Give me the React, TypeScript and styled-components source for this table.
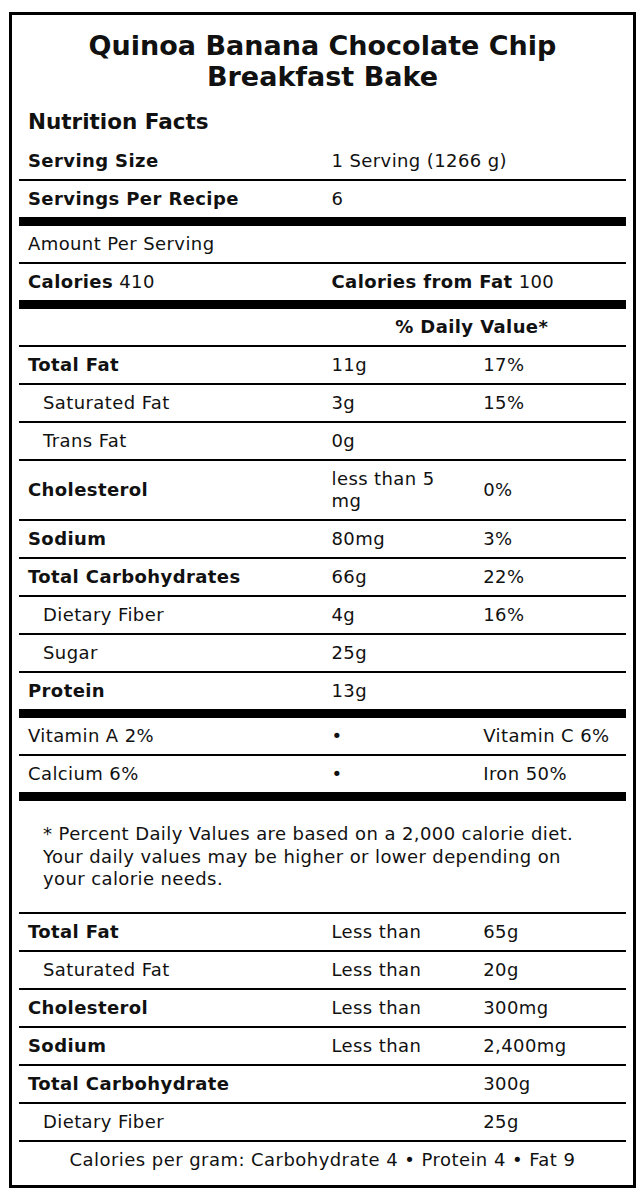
import React from "react";
import styled, { createGlobalStyle } from "styled-components";

const Global = createGlobalStyle`
  html, body { margin: 0; padding: 0; background: #fff; }
  body { font-family: "DejaVu Sans", "Liberation Sans", sans-serif; color: #111; }
  * { box-sizing: border-box; }
`;

const Label = styled.div`
  width: 627px;
  margin: 12px 0 10px 9px;
  border: 3px solid #000;
  padding: 7px;
  background: #fff;
`;

const Title = styled.h1`
  margin: 0;
  padding: 8px 0 0;
  font-size: 27px;
  line-height: 31px;
  font-weight: bold;
  text-align: center;
`;

const Heading = styled.h2`
  margin: 0;
  padding: 15px 9px 6px;
  font-size: 21.5px;
  line-height: 30px;
  font-weight: bold;
`;

type Border = "thin" | "thick" | "none";

const Row = styled.div<{ $border?: Border }>`
  display: grid;
  grid-template-columns: 50% 25% 25%;
  align-items: center;
  border-bottom: ${({ $border = "thin" }) =>
    $border === "thick" ? "9px solid #000" : $border === "none" ? "0" : "2px solid #000"};
`;

const Cell = styled.div<{ $bold?: boolean; $indent?: boolean; $span?: number; $center?: boolean }>`
  grid-column: span ${({ $span = 1 }) => $span};
  padding: 7px 14px 7px ${({ $indent }) => ($indent ? "24px" : "9px")};
  font-size: 18px;
  line-height: 22px;
  letter-spacing: 0.4px;
  min-height: 36px;
  display: flex;
  align-items: center;
  justify-content: ${({ $center }) => ($center ? "center" : "flex-start")};
  font-weight: ${({ $bold }) => ($bold ? "bold" : "normal")};
`;

const Strong = styled.span`
  font-weight: bold;
`;

const Footnote = styled.p`
  margin: 0;
  padding: 22px 35px 21px 24px;
  font-size: 18px;
  line-height: 22.5px;
  letter-spacing: 0.4px;
  border-bottom: 2px solid #000;
`;

const PerGram = styled.div`
  padding: 7px 9px;
  font-size: 18px;
  line-height: 22px;
  letter-spacing: 0.45px;
  text-align: center;
`;

type Nutrient = { name: string; amount: string; dv?: string; bold?: boolean; indent?: boolean; last?: boolean };

const nutrients: Nutrient[] = [
  { name: "Total Fat", amount: "11g", dv: "17%", bold: true },
  { name: "Saturated Fat", amount: "3g", dv: "15%", indent: true },
  { name: "Trans Fat", amount: "0g", indent: true },
  { name: "Cholesterol", amount: "less than 5 mg", dv: "0%", bold: true },
  { name: "Sodium", amount: "80mg", dv: "3%", bold: true },
  { name: "Total Carbohydrates", amount: "66g", dv: "22%", bold: true },
  { name: "Dietary Fiber", amount: "4g", dv: "16%", indent: true },
  { name: "Sugar", amount: "25g", indent: true },
  { name: "Protein", amount: "13g", bold: true, last: true },
];

const limits: Nutrient[] = [
  { name: "Total Fat", amount: "Less than", dv: "65g", bold: true },
  { name: "Saturated Fat", amount: "Less than", dv: "20g", indent: true },
  { name: "Cholesterol", amount: "Less than", dv: "300mg", bold: true },
  { name: "Sodium", amount: "Less than", dv: "2,400mg", bold: true },
  { name: "Total Carbohydrate", amount: "", dv: "300g", bold: true },
  { name: "Dietary Fiber", amount: "", dv: "25g", indent: true },
];

export default function App() {
  return (
    <>
      <Global />
      <Label>
        <Title>
          Quinoa Banana Chocolate Chip
          <br />
          Breakfast Bake
        </Title>
        <Heading>Nutrition Facts</Heading>
        <Row>
          <Cell $bold>Serving Size</Cell>
          <Cell $span={2}>1 Serving (1266 g)</Cell>
        </Row>
        <Row $border="thick">
          <Cell $bold>Servings Per Recipe</Cell>
          <Cell $span={2}>6</Cell>
        </Row>
        <Row>
          <Cell $span={3}>Amount Per Serving</Cell>
        </Row>
        <Row $border="thick">
          <Cell>
            <span>
              <Strong>Calories</Strong> 410
            </span>
          </Cell>
          <Cell $span={2}>
            <span>
              <Strong>Calories from Fat</Strong> 100
            </span>
          </Cell>
        </Row>
        <Row>
          <Cell />
          <Cell $span={2} $bold $center>
            % Daily Value*
          </Cell>
        </Row>
        {nutrients.map((n) => (
          <Row key={n.name} $border={n.last ? "thick" : "thin"}>
            <Cell $bold={n.bold} $indent={n.indent}>
              {n.name}
            </Cell>
            <Cell>{n.amount}</Cell>
            <Cell>{n.dv ?? ""}</Cell>
          </Row>
        ))}
        <Row>
          <Cell>Vitamin A 2%</Cell>
          <Cell>•</Cell>
          <Cell>Vitamin C 6%</Cell>
        </Row>
        <Row $border="thick">
          <Cell>Calcium 6%</Cell>
          <Cell>•</Cell>
          <Cell>Iron 50%</Cell>
        </Row>
        <Footnote>
          * Percent Daily Values are based on a 2,000 calorie diet. Your daily values may be higher or lower
          depending on your calorie needs.
        </Footnote>
        {limits.map((n) => (
          <Row key={n.name}>
            <Cell $bold={n.bold} $indent={n.indent}>
              {n.name}
            </Cell>
            <Cell>{n.amount}</Cell>
            <Cell>{n.dv}</Cell>
          </Row>
        ))}
        <PerGram>Calories per gram: Carbohydrate 4 • Protein 4 • Fat 9</PerGram>
      </Label>
    </>
  );
}
